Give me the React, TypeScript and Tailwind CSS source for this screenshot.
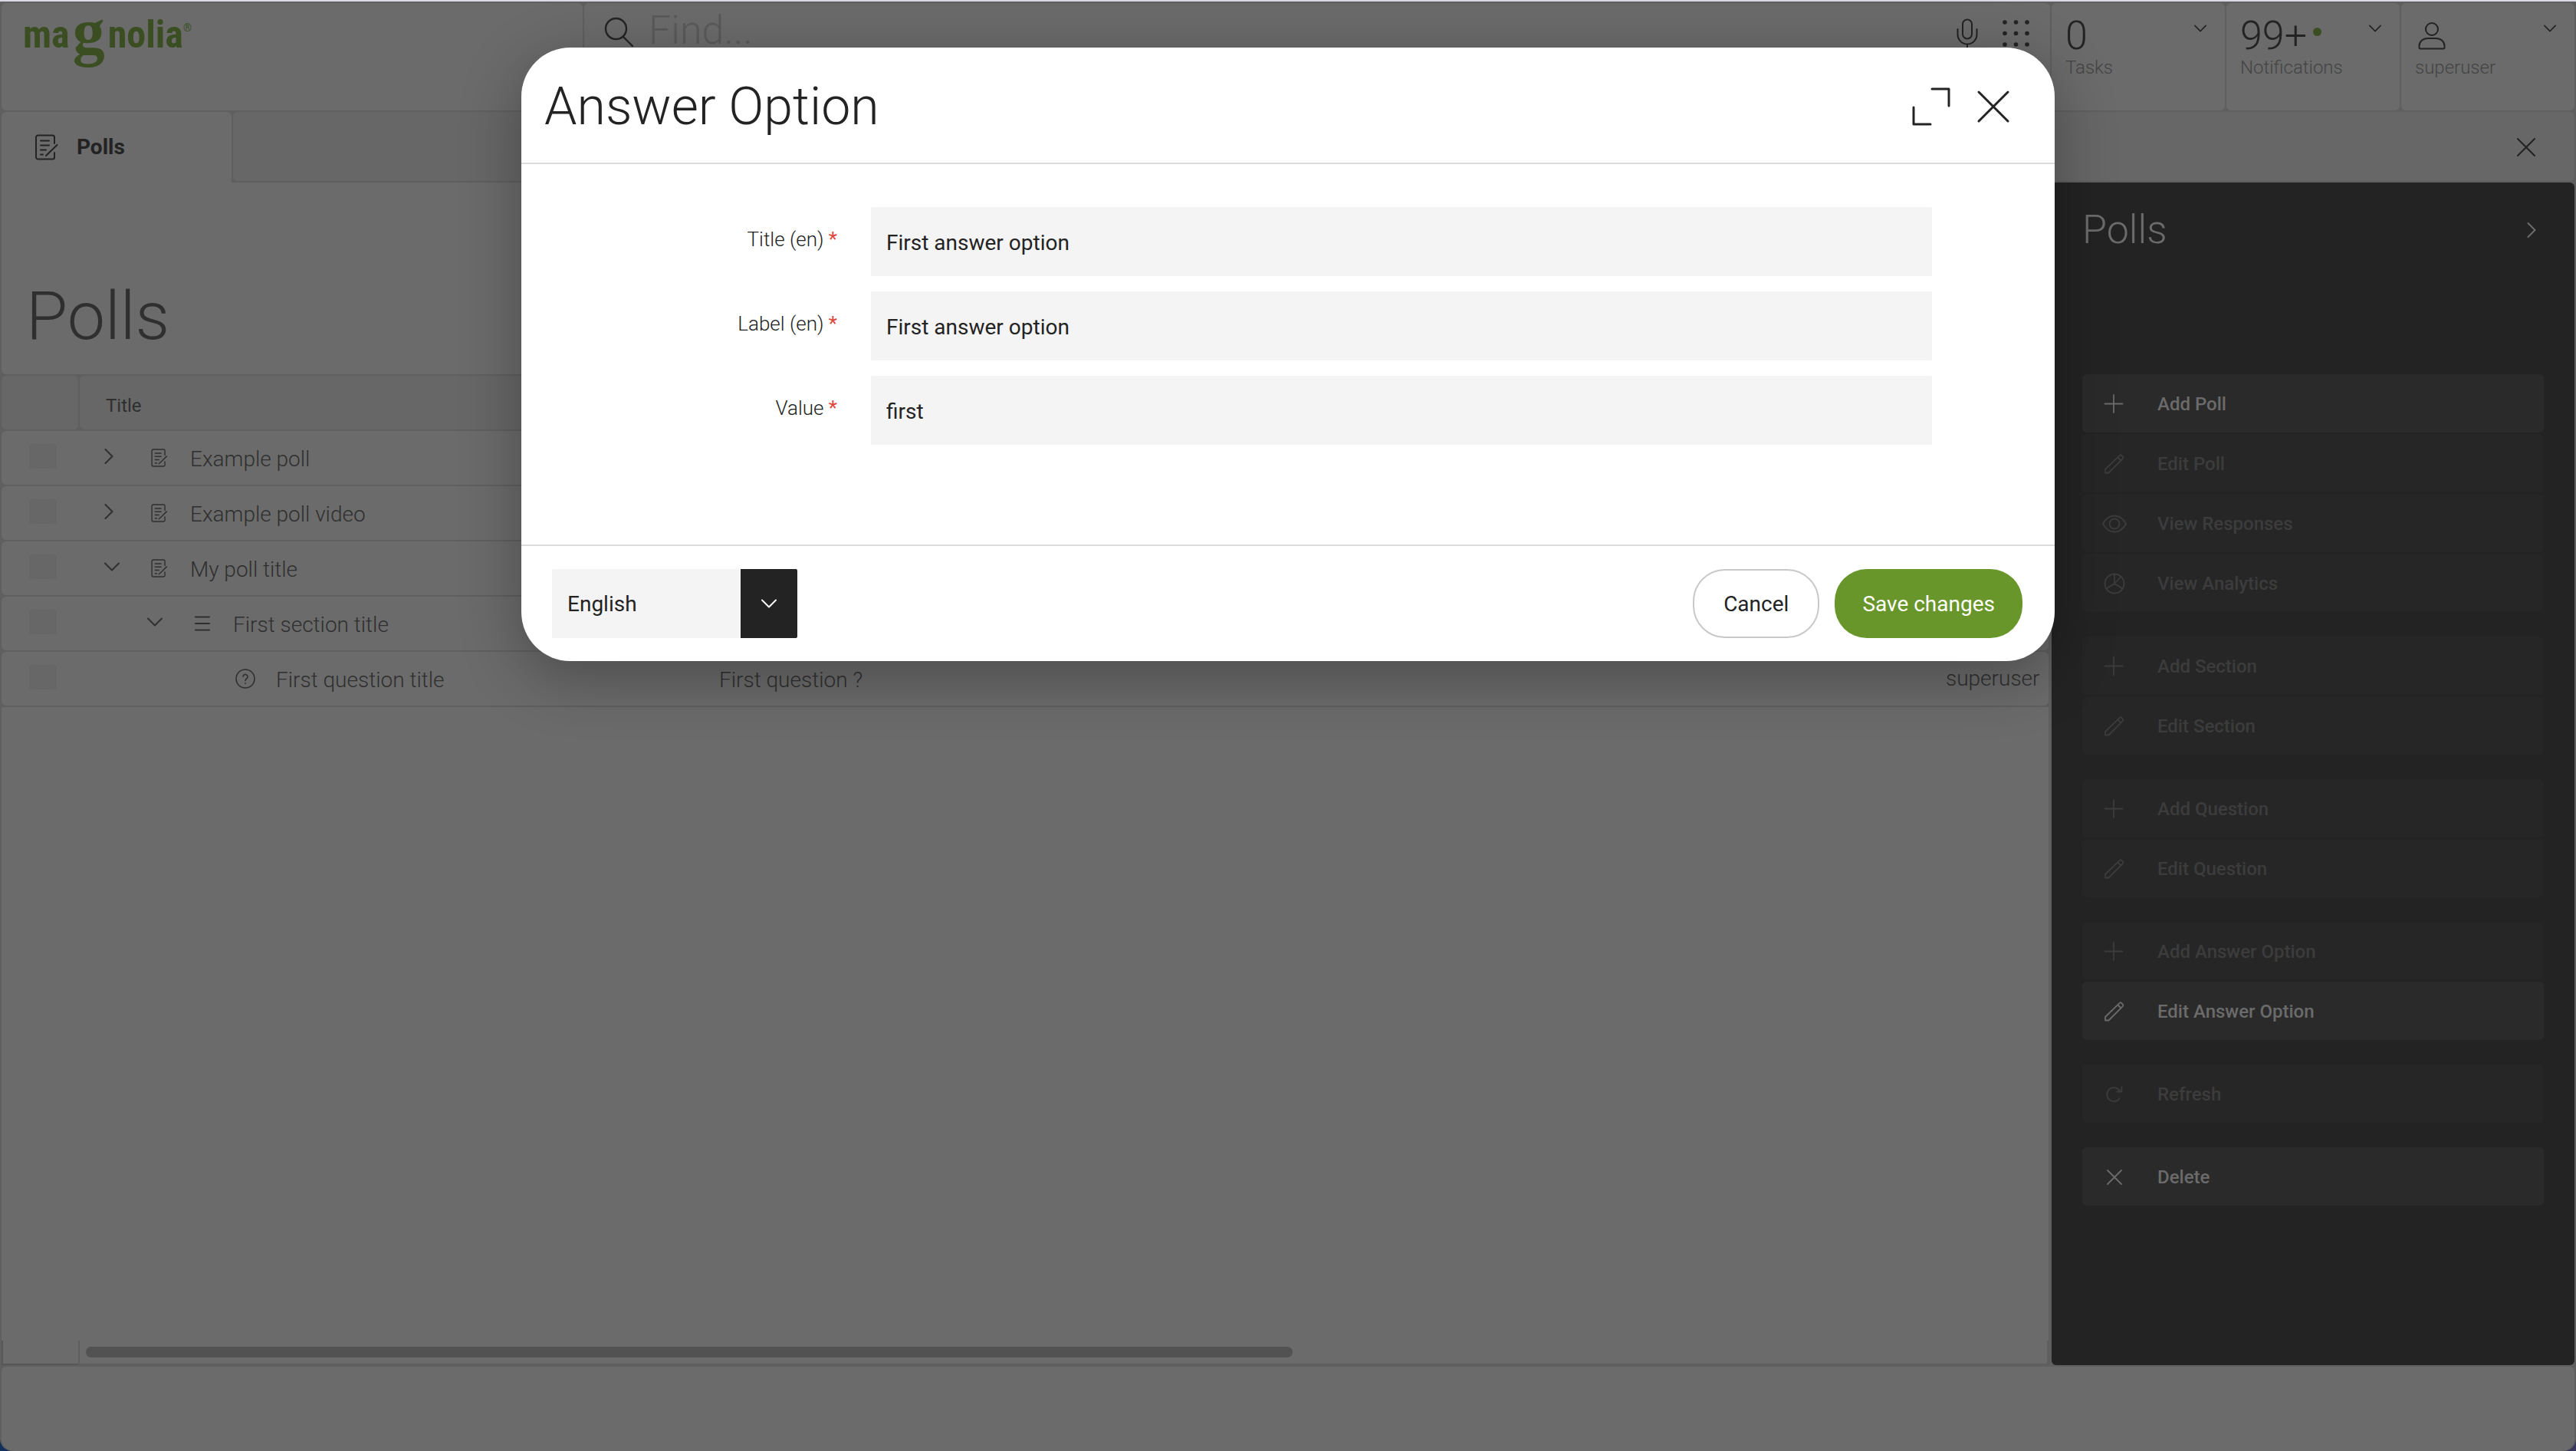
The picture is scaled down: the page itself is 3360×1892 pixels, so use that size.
import type { ReactNode } from "react";

type IconProps = { className?: string };

function Svg({ box, className, width = 2, children }: { box: string; className?: string; width?: number; children: ReactNode }) {
  return (
    <svg viewBox={box} className={className} fill="none" stroke="currentColor" strokeWidth={width} strokeLinecap="round" strokeLinejoin="round" aria-hidden="true">
      {children}
    </svg>
  );
}

const ChevronDown = ({ className }: IconProps) => (
  <Svg box="0 0 20 12" className={className}><path d="M1 1.500l9 9 9-9" /></Svg>
);
const ChevronRight = ({ className }: IconProps) => (
  <Svg box="0 0 12 20" className={className}><path d="M1.500 1l9 9-9 9" /></Svg>
);
const Cross = ({ className }: IconProps) => (
  <Svg box="0 0 26 26" className={className}><path d="M2 2l22 22M24 2L2 24" /></Svg>
);
const PollIcon = ({ className }: IconProps) => (
  <Svg box="0 0 30 34" className={className}>
    <path d="M25 12V4a2.500 2.500 0 0 0-2.500-2.500h-19A2.500 2.500 0 0 0 1 4v26a2.500 2.500 0 0 0 2.500 2.500h19A2.500 2.500 0 0 0 25 30v-6" />
    <path d="M7 8.500h11M7 14.500h11M7 20.500h7M7 26.500h3M28.500 14L14 28" />
  </Svg>
);
const SectionIcon = ({ className }: IconProps) => (
  <Svg box="0 0 20 20" className={className}><path d="M1 1.500h18M1 10h18M1 18.500h18" /></Svg>
);
const QuestionIcon = ({ className }: IconProps) => (
  <Svg box="0 0 26 26" className={className} width={1.6}>
    <circle cx="13" cy="13" r="12" />
    <path d="M10 10.200a3 3 0 1 1 4.500 2.800c-1.100.7-1.500 1.300-1.500 2.600M13 18.800v.4" />
  </Svg>
);
const SearchIcon = ({ className }: IconProps) => (
  <Svg box="0 0 40 40" className={className} width={2.4}>
    <circle cx="15.500" cy="15.500" r="13.500" /><path d="M26 27l11 11" />
  </Svg>
);
const MicIcon = ({ className }: IconProps) => (
  <Svg box="0 0 28 44" className={className}>
    <rect x="8" y="1.500" width="12" height="25" rx="6" />
    <path d="M1.500 14v7a12.500 12.500 0 0 0 25 0v-7M14 33.500v9M7 42.500h14" />
  </Svg>
);
const GridIcon = ({ className }: IconProps) => (
  <svg viewBox="0 0 36 36" className={className} fill="currentColor" aria-hidden="true">
    {[3, 17.5, 32].map((y) => [3, 17.5, 32].map((x) => <circle key={`${x}-${y}`} cx={x} cy={y} r="2.800" />))}
  </svg>
);
const UserIcon = ({ className }: IconProps) => (
  <Svg box="0 0 36 36" className={className}>
    <circle cx="18" cy="9" r="8" />
    <path d="M1.500 33v-2c0-6 5-10 11-10h11c6 0 11 4 11 10v2a1.500 1.500 0 0 1-1.500 1.500H3a1.500 1.500 0 0 1-1.500-1.500z" />
  </Svg>
);
const ExpandIcon = ({ className }: IconProps) => (
  <Svg box="0 0 50 50" className={className} width={3}><path d="M26 2h22v22M2 26v22h22" /></Svg>
);
const PlusIcon = ({ className }: IconProps) => (
  <Svg box="0 0 28 28" className={className} width={1.8}><path d="M13 2v23M1.500 13.500h23" /></Svg>
);
const PencilIcon = ({ className }: IconProps) => (
  <Svg box="0 0 28 28" className={className} width={1.8}>
    <path d="M2 25.500v-4.500L21 2.600q1-1 2 0l2 2.200q.9 1 0 2L6.500 25.500zM18.500 5.500l4 4" />
  </Svg>
);
const EyeIcon = ({ className }: IconProps) => (
  <Svg box="0 0 32 28" className={className} width={1.8}>
    <path d="M1 14C5 6.500 10 3.500 16 3.500S27 6.500 31 14c-4 7.500-9 10.500-15 10.500S5 21.500 1 14z" />
    <circle cx="16" cy="14" r="6.500" />
  </Svg>
);
const PieIcon = ({ className }: IconProps) => (
  <Svg box="0 0 28 28" className={className} width={1.8}>
    <circle cx="14" cy="14" r="12.500" />
    <path d="M14 1.500V14l8.500-9M14 14L3.500 20.500M14 14l10.500 6.500" />
  </Svg>
);
const RefreshIcon = ({ className }: IconProps) => (
  <Svg box="0 0 28 28" className={className} width={1.8}>
    <path d="M20.500 19.500A9 9 0 1 1 21 9.500M23.500 4.500v6h-6" />
  </Svg>
);
const DeleteIcon = ({ className }: IconProps) => (
  <Svg box="0 0 28 28" className={className} width={1.8}><path d="M5 5l18 18M23 5L5 23" /></Svg>
);

type Row = { title: string; level: number; state?: "open" | "closed"; kind: "poll" | "section" | "question"; text?: string; author?: string };

const rows: Row[] = [
  { title: "Example poll", level: 0, state: "closed", kind: "poll" },
  { title: "Example poll video", level: 0, state: "closed", kind: "poll" },
  { title: "My poll title", level: 0, state: "open", kind: "poll" },
  { title: "First section title", level: 1, state: "open", kind: "section" },
  { title: "First question title", level: 2, kind: "question", text: "First question ?", author: "superuser" },
];

const indent = ["pl-8", "pl-[88px]", "pl-36"];

type Action = { label: string; icon: (p: IconProps) => ReactNode; enabled?: boolean };

const actionGroups: Action[][] = [
  [
    { label: "Add Poll", icon: PlusIcon, enabled: true },
    { label: "Edit Poll", icon: PencilIcon },
    { label: "View Responses", icon: EyeIcon },
    { label: "View Analytics", icon: PieIcon },
  ],
  [{ label: "Add Section", icon: PlusIcon }, { label: "Edit Section", icon: PencilIcon }],
  [{ label: "Add Question", icon: PlusIcon }, { label: "Edit Question", icon: PencilIcon }],
  [{ label: "Add Answer Option", icon: PlusIcon }, { label: "Edit Answer Option", icon: PencilIcon, enabled: true }],
  [{ label: "Refresh", icon: RefreshIcon }],
  [{ label: "Delete", icon: DeleteIcon, enabled: true }],
];

const fields = [
  { id: "title", label: "Title (en)", value: "First answer option" },
  { id: "label", label: "Label (en)", value: "First answer option" },
  { id: "value", label: "Value", value: "first" },
];

function HeaderTile({ label, children }: { label: string; children: ReactNode }) {
  return (
    <button type="button" className="flex w-[226px] items-start justify-between rounded-md bg-[#6b6b6b] pt-4 pr-6 pl-[18px] text-left text-[#232323]">
      <span className="flex flex-col">
        <span className="flex h-[54px] items-center text-[52px] leading-[54px] font-light">{children}</span>
        <span className="text-2xl leading-7 font-light text-[#444444]">{label}</span>
      </span>
      <ChevronDown className="mt-3 h-[10px] w-4" />
    </button>
  );
}

function Logo() {
  return (
    <span className="flex items-start">
      <span className="font-['Roboto_Condensed',Roboto,sans-serif] text-[50px] leading-[66px] font-bold">ma</span>
      <span className="px-1 font-['Liberation_Serif',serif] text-[84px] leading-[60px] font-bold">g</span>
      <span className="font-['Roboto_Condensed',Roboto,sans-serif] text-[50px] leading-[66px] font-bold">nolia</span>
      <span className="text-sm leading-[48px]">®</span>
    </span>
  );
}

function TopBar() {
  return (
    <header className="flex h-[140px] gap-0.5">
      <a href="#home" aria-label="magnolia" className="flex w-[758px] items-start rounded-md bg-[#6b6b6b] pt-2 pl-7 text-[#3b4e22]">
        <Logo />
      </a>
      <div className="flex flex-1 items-start rounded-md bg-[#6b6b6b] pt-4 pr-[26px] pl-[26px] text-[#232323]">
        <SearchIcon className="mt-0.5 h-10 w-10 shrink-0" />
        <input type="search" aria-label="Find" placeholder="Find..." className="-mt-3 ml-[18px] h-16 min-w-0 flex-1 bg-transparent text-[52px] font-light placeholder:text-[#5a5a5a]" />
        <button type="button" aria-label="Voice search" className="mt-1"><MicIcon className="h-11 w-7" /></button>
        <button type="button" aria-label="Apps" className="mt-1.5 ml-8"><GridIcon className="h-9 w-9" /></button>
      </div>
      <HeaderTile label="Tasks">0</HeaderTile>
      <HeaderTile label="Notifications">
        99+<span className="mb-3 ml-2 h-[11px] w-[11px] rounded-full bg-[#3b4e22]" />
      </HeaderTile>
      <HeaderTile label="superuser"><UserIcon className="ml-1 h-9 w-9" /></HeaderTile>
    </header>
  );
}

function TabBar() {
  return (
    <nav className="mt-0.5 flex h-[92px] gap-0.5">
      <button type="button" className="flex w-[300px] items-center gap-6 rounded-t-md bg-[#6b6b6b] pl-11 text-[28px] font-bold text-[#232323]">
        <PollIcon className="h-[34px] w-[30px]" />
        Polls
      </button>
      <div className="mb-0.5 flex flex-1 items-center justify-end rounded-md bg-[#676767] pr-[50px] text-[#232323]">
        <button type="button" aria-label="Close app" className="pt-0.5"><Cross className="h-[26px] w-[26px]" /></button>
      </div>
    </nav>
  );
}

function RowIcon({ kind }: { kind: Row["kind"] }) {
  if (kind === "poll") return <PollIcon className="h-6 w-[22px]" />;
  if (kind === "section") return <SectionIcon className="h-5 w-5" />;
  return <QuestionIcon className="h-[26px] w-[26px]" />;
}

function PollsTable() {
  return (
    <table className="w-full table-fixed border-separate border-spacing-x-0 border-spacing-y-0.5 text-left text-[#2f2f2f]">
      <colgroup>
        <col className="w-[102px]" />
        <col className="w-[802px]" />
        <col />
        <col className="w-[166px]" />
      </colgroup>
      <thead>
        <tr className="h-[70px]">
          <th aria-label="Select" className="rounded-md border-r-2 border-[#5f5f5f] bg-[#676767]" />
          <th className="rounded-l-md bg-[#676767] pt-2 pl-[34px] text-2xl font-normal">Title</th>
          <th aria-label="Question" className="bg-[#676767]" />
          <th aria-label="Author" className="rounded-r-md bg-[#676767]" />
        </tr>
      </thead>
      <tbody>
        {rows.map((row) => (
          <tr key={row.title} className="h-[70px] text-[28px] font-light">
            <td className="rounded-l-md bg-[#6b6b6b] pl-9">
              <input type="checkbox" aria-label={`Select ${row.title}`} className="mb-1 block h-8 w-9 appearance-none rounded-sm bg-[#676767]" />
            </td>
            <td className="bg-[#6b6b6b]">
              <div className={`flex items-center ${indent[row.level]}`}>
                <span className="flex w-14 items-center pb-1">
                  {row.state && (
                    <button type="button" aria-label={row.state === "open" ? "Collapse" : "Expand"}>
                      {row.state === "open" ? <ChevronDown className="h-3 w-5" /> : <ChevronRight className="h-5 w-3" />}
                    </button>
                  )}
                </span>
                <span className="mr-6 flex w-8 items-center justify-center"><RowIcon kind={row.kind} /></span>
                <span className="pt-1">{row.title}</span>
              </div>
            </td>
            <td className="bg-[#6b6b6b] pt-1 pl-8">{row.text}</td>
            <td className="rounded-r-md bg-[#6b6b6b] pl-8">{row.author}</td>
          </tr>
        ))}
      </tbody>
    </table>
  );
}

function ActionPanel() {
  return (
    <aside className="mb-0.5 w-[682px] shrink-0 rounded-md bg-[#232323] px-10">
      <div className="flex h-[250px] items-start justify-between pt-[30px] pr-[10px] text-[#6b6b6b]">
        <h2 className="text-[52px] leading-[64px] font-light">Polls</h2>
        <button type="button" aria-label="Collapse panel" className="mt-[22px]"><ChevronRight className="h-5 w-3" /></button>
      </div>
      <div className="flex flex-col gap-8">
        {actionGroups.map((group) => (
          <div key={group[0].label} className="flex flex-col gap-0.5">
            {group.map(({ label, icon: Icon, enabled }) => (
              <button
                key={label}
                type="button"
                disabled={!enabled}
                className={`flex h-[76px] items-center rounded-md pt-0.5 pl-[26px] text-left text-2xl font-medium ${enabled ? "bg-[#2a2a2a] text-[#6b6b6b]" : "bg-[#262626] text-[#3c3c3c]"}`}
              >
                <span className="mr-10 flex w-8 justify-center"><Icon className="h-7" /></span>
                {label}
              </button>
            ))}
          </div>
        ))}
      </div>
    </aside>
  );
}

function AnswerDialog() {
  return (
    <div role="dialog" aria-modal="true" aria-labelledby="dialog-title" className="flex w-full max-w-[2000px] flex-col overflow-hidden rounded-[64px] bg-white text-[#232323] shadow-[0_20px_80px_rgba(0,0,0,0.3)]">
      <div className="flex h-[152px] items-center border-b-2 border-[#dcdcdc] pt-1 pr-[58px] pl-[30px]">
        <h1 id="dialog-title" className="flex-1 text-[68px] font-light">Answer Option</h1>
        <button type="button" aria-label="Expand dialog"><ExpandIcon className="h-[50px] w-[50px]" /></button>
        <button type="button" aria-label="Close dialog" className="ml-[34px]">
          <Svg box="0 0 44 44" className="h-11 w-11" width={3}><path d="M3 3l38 38M41 3L3 41" /></Svg>
        </button>
      </div>
      <form id="answer-form" className="flex flex-col gap-5 pt-14 pr-40 pb-[130px]">
        {fields.map((field) => (
          <div key={field.id} className="flex gap-11">
            <label htmlFor={field.id} className="w-[412px] shrink-0 pt-6 text-right text-[26px] leading-9 font-light">
              {field.label} <span className="font-normal text-[#e0463c]">*</span>
            </label>
            <input id={field.id} type="text" required defaultValue={field.value} className="h-[90px] min-w-0 flex-1 rounded-xs bg-[#f4f4f4] px-5 pt-0.5 text-[28px]" />
          </div>
        ))}
      </form>
      <div className="flex items-center border-t-2 border-[#dcdcdc] py-[30px] pr-[42px] pl-10 text-[28px]">
        <div className="relative w-80">
          <select aria-label="Language" className="h-[90px] w-full appearance-none rounded-xs bg-[#f4f4f4] pt-0.5 pl-5">
            <option>English</option>
          </select>
          <span className="pointer-events-none absolute inset-y-0 right-0 flex w-[74px] items-center justify-center rounded-r-xs bg-[#232323] text-white">
            <ChevronDown className="h-3 w-5" />
          </span>
        </div>
        <button type="button" className="ml-auto h-[90px] rounded-[42px] border-2 border-[#c8c8c8] px-[38px] pt-0.5">Cancel</button>
        <button type="submit" form="answer-form" className="ml-5 h-[90px] rounded-[42px] bg-[#68962a] px-9 pt-0.5 text-white">Save changes</button>
      </div>
    </div>
  );
}

export default function App() {
  return (
    <div className="relative flex min-h-screen flex-col bg-linear-to-r from-[#12305c] to-[#3a3860] font-[Roboto,sans-serif]">
      <div className="flex flex-1 flex-col rounded-b-2xl border-t-2 border-[#d9dae3] bg-[#5f5f5f] px-0.5 pt-0.5">
        <TopBar />
        <TabBar />
        <main className="flex flex-1 gap-1">
          <section className="flex min-w-0 flex-1 flex-col">
            <div className="h-[250px] rounded-b-md bg-[#6b6b6b] pt-[118px] pl-8">
              <h2 className="text-[88px] leading-[112px] font-light text-[#2f2f2f]">Polls</h2>
            </div>
            <PollsTable />
            <div className="flex-1 bg-[#6b6b6b]" />
            <div className="mb-0.5 flex h-8 bg-[#6b6b6b]">
              <div className="w-[100px] border-b-2 border-l-2 border-[#575757]" />
              <div className="flex flex-1 items-center border-x-2 border-b-2 border-[#5f5f5f] pl-2">
                <div className="h-[14px] w-8/13 rounded-full bg-[#525252]" />
              </div>
            </div>
          </section>
          <ActionPanel />
        </main>
        <footer className="h-[110px] rounded-t-md rounded-b-2xl bg-[#6b6b6b]" />
      </div>
      <div className="absolute inset-0 flex items-start justify-center pt-[62px]">
        <AnswerDialog />
      </div>
    </div>
  );
}
